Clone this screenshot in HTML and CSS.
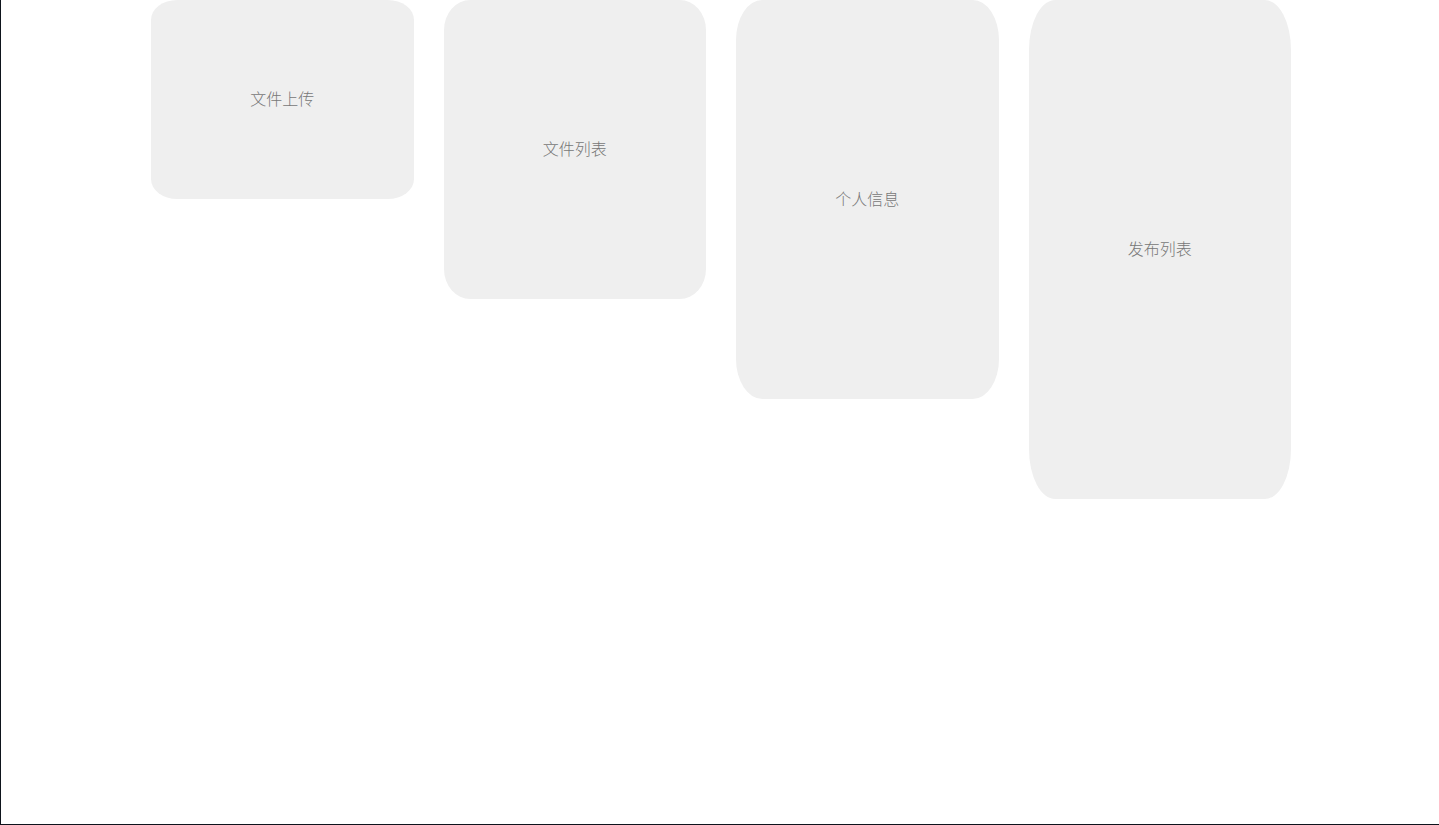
FILE: index.html
```html
<!DOCTYPE html>
<html lang="zh-CN">
<head>
<meta charset="utf-8">
<title>Menu</title>
<link rel="stylesheet" href="styles.css">
</head>
<body>
<div class="page">
  <div class="cards">
    <div class="card h200">文件上传</div>
    <div class="card h300">文件列表</div>
    <div class="card h400">个人信息</div>
    <div class="card h500">发布列表</div>
  </div>
</div>
</body>
</html>
```
FILE: styles.css
```css
html, body {
  margin: 0;
  padding: 0;
  background: #ffffff;
}
.page {
  box-sizing: border-box;
  height: 825px;
  border-left: 1px solid #0e141c;
  border-bottom: 1px solid #0e141c;
  overflow: hidden;
}
.cards {
  width: 1140px;
  margin: 0 auto;
  display: flex;
  align-items: flex-start;
  gap: 30px;
  padding-left: 2px;
}
.card {
  box-sizing: border-box;
  flex: 0 0 262.5px;
  background: #efefef;
  border-radius: 10%;
  display: flex;
  align-items: center;
  justify-content: center;
  padding-bottom: 4px;
  font-family: "Noto Sans CJK SC", "Noto Sans", sans-serif;
  font-weight: 300;
  font-size: 16px;
  color: #777777;
}
.h200 { height: 199px; }
.h300 { height: 299px; }
.h400 { height: 399px; }
.h500 { height: 499px; }
```
